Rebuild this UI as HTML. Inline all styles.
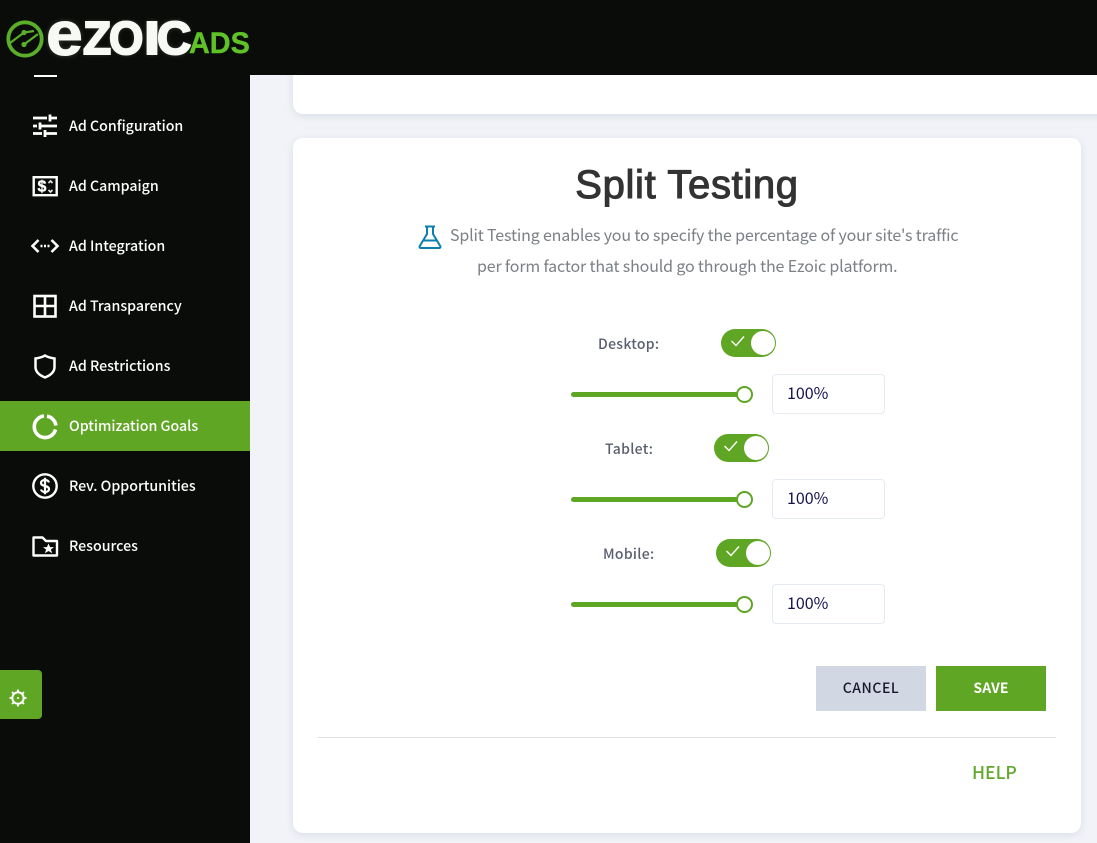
<!DOCTYPE html>
<html lang="en"><head><meta charset="utf-8"><title>Split Testing</title>
<style>
*{box-sizing:border-box}
html,body{margin:0;padding:0}
body{width:1097px;height:843px;overflow:hidden;position:relative;background:#f1f3f8;font-family:"Noto Sans CJK JP","Liberation Sans",sans-serif}
.abs{position:absolute}
#top{left:0;top:0;width:1097px;height:75px;background:#090c08}
#side{left:0;top:0;width:250px;height:843px;background:#090c08}
.nav{position:absolute;left:69px;color:#fff;font-size:14.2px;line-height:20px;white-space:nowrap;font-weight:500}
.ic{position:absolute;left:30px;width:30px;height:30px;fill:none;stroke:#fff}
.card{position:absolute;background:#fff;border-radius:10px;box-shadow:0 2px 8px rgba(60,70,100,.12)}
.lbl{position:absolute;color:#5a5f70;font-size:14px;font-weight:500;line-height:20px;white-space:nowrap;letter-spacing:.3px}
.tg{position:absolute;width:55px;height:28px;border-radius:14px;background:#5fa624}
.tg i{position:absolute;right:1px;top:2px;width:24px;height:24px;border-radius:50%;background:#fff}
.tg svg{position:absolute;left:9px;top:5px;width:16px;height:14px;fill:none;stroke:#fff;stroke-width:1.4}
.tr{position:absolute;left:571px;width:170px;height:5px;border-radius:3px;background:#5fa624}
.th{position:absolute;left:736px;width:17px;height:17px;border-radius:50%;background:#fff;border:2px solid #5fa624}
.inp{position:absolute;left:772px;width:113px;height:40px;border:1px solid #e6eaf2;border-radius:4px;background:#fff;color:#15124e;font-size:16px;line-height:34px;padding-left:14px}
.desc{position:absolute;color:#7c8087;font-size:16px;line-height:24px;white-space:nowrap;letter-spacing:-.16px}
.lg{position:absolute;font-family:"Liberation Sans",sans-serif;font-weight:700;color:#f7f9f4;-webkit-text-stroke:2px #f7f9f4;font-size:46px;line-height:50px;transform-origin:0 0;top:13px;text-shadow:0 0 5px rgba(255,255,255,.25)}
</style></head><body>
<div class="abs" id="side"></div>
<div class="abs" id="top"></div>

<svg class="abs" style="left:5px;top:19px" width="40" height="40" viewBox="0 0 40 40" fill="none" stroke="#5aae2a" stroke-width="3.8"><circle cx="20" cy="20" r="16.700"/><path d="M5 24L19 13.500L29 12M19 25.500L33 15" stroke-width="2.200"/><circle cx="19" cy="13.500" r="2.600" fill="#5aae2a" stroke="none"/><circle cx="19" cy="25.500" r="2.600" fill="#5aae2a" stroke="none"/></svg>
<div class="lg" style="left:46px;top:5px;font-size:62px;line-height:60px;-webkit-text-stroke:1px #f7f9f4;transform:scaleX(1.07)">e</div>
<div class="lg" style="left:83px">Z</div>
<div class="lg" style="left:109px;transform:scaleX(.96)">O</div>
<div class="lg" style="left:144px;transform:scaleX(1.25)">I</div>
<div class="lg" style="left:157px;transform:scaleX(1.03)">C</div>
<div class="abs" style="left:189px;top:27.500px;font:700 30px/32px 'Liberation Sans',sans-serif;color:#5fc226;transform-origin:0 0;transform:scaleX(.96);-webkit-text-stroke:.4px #5fc226">ADS</div>

<div class="abs" style="left:34px;top:75px;width:23px;height:2px;background:#fff"></div>

<svg class="ic" style="top:111px;stroke-width:2.800" viewBox="0 0 30 30"><path d="M3 7H17M20 3.500V10.500M20 7H27M3 15H7M10 11.500V18.500M10 15H27M3 22.500H12M15 19V26M15 22.500H27"/></svg>
<div class="nav" style="top:116px">Ad Configuration</div>

<svg class="ic" style="top:171px;stroke-width:2.400" viewBox="0 0 30 30"><rect x="3.700" y="6.200" width="23" height="18"/><text x="7.500" y="20.500" font-size="16" font-weight="700" fill="#fff" stroke="#fff" stroke-width=".4" font-family="Liberation Sans">$</text><path d="M18.500 12l2-2 2 2M18.500 19l2 2 2-2" stroke-width="1.700" stroke="#e4e6e8"/></svg>
<div class="nav" style="top:176px">Ad Campaign</div>

<svg class="ic" style="top:231px;stroke-width:2.600" viewBox="0 0 30 30"><path d="M8.500 9L2.500 15L8.500 21M21.500 9L27.500 15L21.500 21"/><path d="M10.500 15h2M14 15h2M17.500 15h2" stroke-width="2.400"/></svg>
<div class="nav" style="top:236px">Ad Integration</div>

<svg class="ic" style="top:291px;stroke-width:2.600" viewBox="0 0 30 30"><rect x="4.500" y="5" width="21" height="20.500"/><path d="M15 5V25.500M4.500 15H25.500"/></svg>
<div class="nav" style="top:296px">Ad Transparency</div>

<svg class="ic" style="top:351px;stroke-width:2.500" viewBox="0 0 30 30"><path d="M15 4.500C18 6.500 21 7 24.500 7.500V16C24.500 21 20 24.500 15 26.500C10 24.500 5.500 21 5.500 16V7.500C9 7 12 6.500 15 4.500Z"/></svg>
<div class="nav" style="top:356px">Ad Restrictions</div>

<div class="abs" style="left:0;top:401px;width:250px;height:50px;background:#5fa624"></div>
<svg class="ic" style="top:411px;stroke-width:3.600" viewBox="0 0 30 30"><path d="M14 5A10.800 10.800 0 1 0 25.500 18.500M17 5.200A10.800 10.800 0 0 1 25.900 14.500"/></svg>
<div class="nav" style="top:416px;color:#fff">Optimization Goals</div>

<svg class="ic" style="top:471px;stroke-width:2.400" viewBox="0 0 30 30"><circle cx="15" cy="15" r="11.700"/><path d="M19 11.500C18.500 9.800 17 9 15 9C12.800 9 11 10 11 12C11 16 19 14 19 18C19 20 17.200 21 15 21C13 21 11.500 20.200 11 18.500M15 6.800V23.200" stroke-width="2.200"/></svg>
<div class="nav" style="top:476px">Rev. Opportunities</div>

<svg class="ic" style="top:531px;stroke-width:2.400" viewBox="0 0 30 30"><path d="M3.500 6.500H12.500L16 10H27V24.500H3.500Z" stroke-linejoin="round"/><path d="M18.500 12.500l1.600 3.600h3.900l-3.100 2.400 1.200 3.800-3.600-2.300-3.600 2.300 1.200-3.800-3.100-2.400h3.900z" fill="#fff" stroke="none"/></svg>
<div class="nav" style="top:536px">Resources</div>

<div class="abs" style="left:0;top:670px;width:42px;height:49px;background:#5fa624;border-radius:0 4px 4px 0"></div>
<svg class="abs" style="left:8px;top:688px" width="20" height="20" viewBox="0 0 20 20" fill="none" stroke="#fff"><circle cx="10" cy="10" r="5.700" stroke-width="2"/><circle cx="10" cy="10" r="1" fill="#fff" stroke="none"/><path d="M10 1.500v2M10 16.500v2M1.500 10h2M16.500 10h2M4 4l1.400 1.400M14.600 14.600L16 16M4 16l1.400-1.400M14.600 5.400L16 4" stroke-width="1.800"/></svg>

<div class="card" style="left:293px;top:40px;width:830px;height:74px"></div>
<div class="abs" style="left:250px;top:0;width:847px;height:75px;background:#090c08"></div>

<div class="card" style="left:293px;top:138px;width:788px;height:695px"></div>

<div class="abs" style="left:293px;top:160px;width:788px;text-align:center;font:400 40px/50px 'Liberation Sans',sans-serif;color:#333;letter-spacing:.65px;-webkit-text-stroke:1.1px #333">Split Testing</div>

<svg class="abs" style="left:417px;top:224px" width="26" height="26" viewBox="0 0 26 26" fill="none" stroke="#0c7fb0" stroke-width="2"><path d="M8 2.500H18M10 2.500V10L2.500 22.500Q2.500 24 4 24H22Q23.500 24 23.500 22.500L16 10V2.500M6.500 16.500H19.500"/></svg>
<div class="desc" style="left:450px;top:222px">Split Testing enables you to specify the percentage of your site's traffic</div>
<div class="desc" style="left:477px;top:253px">per form factor that should go through the Ezoic platform.</div>

<div class="lbl" style="left:598px;top:334px">Desktop:</div>
<div class="tg" style="left:721px;top:329px"><svg viewBox="0 0 16 14"><path d="M1.500 7L6 11.500L14 2.500"/></svg><i></i></div>
<div class="tr" style="top:392px"></div><div class="th" style="top:386px"></div>
<div class="inp" style="top:374px">100%</div>

<div class="lbl" style="left:605px;top:439px">Tablet:</div>
<div class="tg" style="left:714px;top:434px"><svg viewBox="0 0 16 14"><path d="M1.500 7L6 11.500L14 2.500"/></svg><i></i></div>
<div class="tr" style="top:497px"></div><div class="th" style="top:491px"></div>
<div class="inp" style="top:479px">100%</div>

<div class="lbl" style="left:603px;top:544px">Mobile:</div>
<div class="tg" style="left:716px;top:539px"><svg viewBox="0 0 16 14"><path d="M1.500 7L6 11.500L14 2.500"/></svg><i></i></div>
<div class="tr" style="top:602px"></div><div class="th" style="top:596px"></div>
<div class="inp" style="top:584px">100%</div>

<div class="abs" style="left:816px;top:666px;width:110px;height:45px;background:#d1d7e3;color:#15182a;font-size:14px;font-weight:500;line-height:44px;text-align:center;letter-spacing:.55px">CANCEL</div>
<div class="abs" style="left:936px;top:666px;width:110px;height:45px;background:#5fa624;color:#fff;font-size:14px;font-weight:700;line-height:44px;text-align:center;letter-spacing:.15px">SAVE</div>
<div class="abs" style="left:318px;top:737px;width:738px;height:1px;background:#dfe0e2"></div>
<div class="abs" style="left:972px;top:761px;color:#62a82c;font-size:17.600px;font-weight:500;line-height:24px">HELP</div>
</body></html>
